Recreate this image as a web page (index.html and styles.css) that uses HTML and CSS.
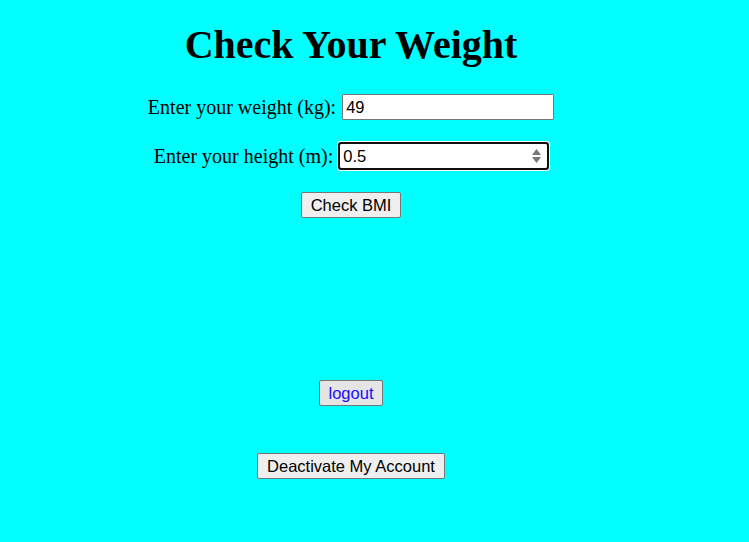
FILE: index.html
```html
<!DOCTYPE html>
<html>
<head>
<meta charset="utf-8">
<title>Check Your Weight</title>
<link rel="stylesheet" href="styles.css">
</head>
<body>
<div class="page">
  <h1 class="title">Check Your Weight</h1>
  <form class="bmi-form">
    <div class="field">
      <label class="label" for="w">Enter your weight (kg):</label>
      <input class="input input-text" id="w" type="text" value="49">
    </div>
    <div class="field">
      <label class="label" for="h">Enter your height (m):</label>
      <span class="input input-number focused">
        <span class="num-value">0.5</span>
        <svg class="spinner" width="9" height="16" viewBox="0 0 9 16"><path d="M4.5 1 L9 7 L0 7 Z M0 9 L9 9 L4.5 15 Z" fill="#777"/></svg>
      </span>
    </div>
    <div class="actions">
      <button type="button" class="btn">Check BMI</button>
    </div>
  </form>
  <div class="logout-row">
    <button type="button" class="btn btn-logout">logout</button>
  </div>
  <div class="deactivate-row">
    <button type="button" class="btn">Deactivate My Account</button>
  </div>
</div>
</body>
</html>
```
FILE: styles.css
```css
html, body {
  background: #00ffff;
}
body {
  margin: 8px;
  font-family: "Liberation Serif", "Times New Roman", serif;
}
.page {
  width: 686px;
  display: flex;
  flex-direction: column;
  align-items: center;
}
.title {
  font-size: 40px;
  font-weight: bold;
  margin: 14px 0 0 0;
  line-height: 46px;
}
.bmi-form {
  display: flex;
  flex-direction: column;
  align-items: center;
  margin-top: 26px;
}
.field {
  display: flex;
  align-items: center;
  gap: 6px;
  height: 26px;
  margin-bottom: 23px;
}
.label {
  font-size: 20px;
  color: #000;
}
.input {
  box-sizing: border-box;
  height: 26px;
  font-family: "Liberation Sans", Arial, sans-serif;
  font-size: 16.5px;
  color: #000;
  background: #fff;
}
.input-text {
  width: 212px;
  border: 1px solid #767676;
  padding: 2px 3px;
  border-radius: 1px;
}
.input-number {
  width: 209px;
  display: flex;
  align-items: center;
  justify-content: space-between;
  border: 1px solid #101010;
  padding: 0 6px 0 3px;
  border-radius: 2px;
}
.focused {
  outline: 2px solid #101010;
  outline-offset: -1px;
  box-shadow: 0 0 0 2px #fff;
}
.spinner {
  display: block;
}
.btn {
  font-family: "Liberation Sans", Arial, sans-serif;
  font-size: 16.5px;
  color: #000;
  background: #efefef;
  border: 1px solid #767676;
  border-radius: 2px;
  padding: 3px 9px;
  height: 26px;
  line-height: 18px;
}
.logout-row {
  margin-top: 162px;
}
.btn-logout {
  color: #1a0dff;
  background: #e5e5e5;
}
.deactivate-row {
  margin-top: 47px;
}
```
